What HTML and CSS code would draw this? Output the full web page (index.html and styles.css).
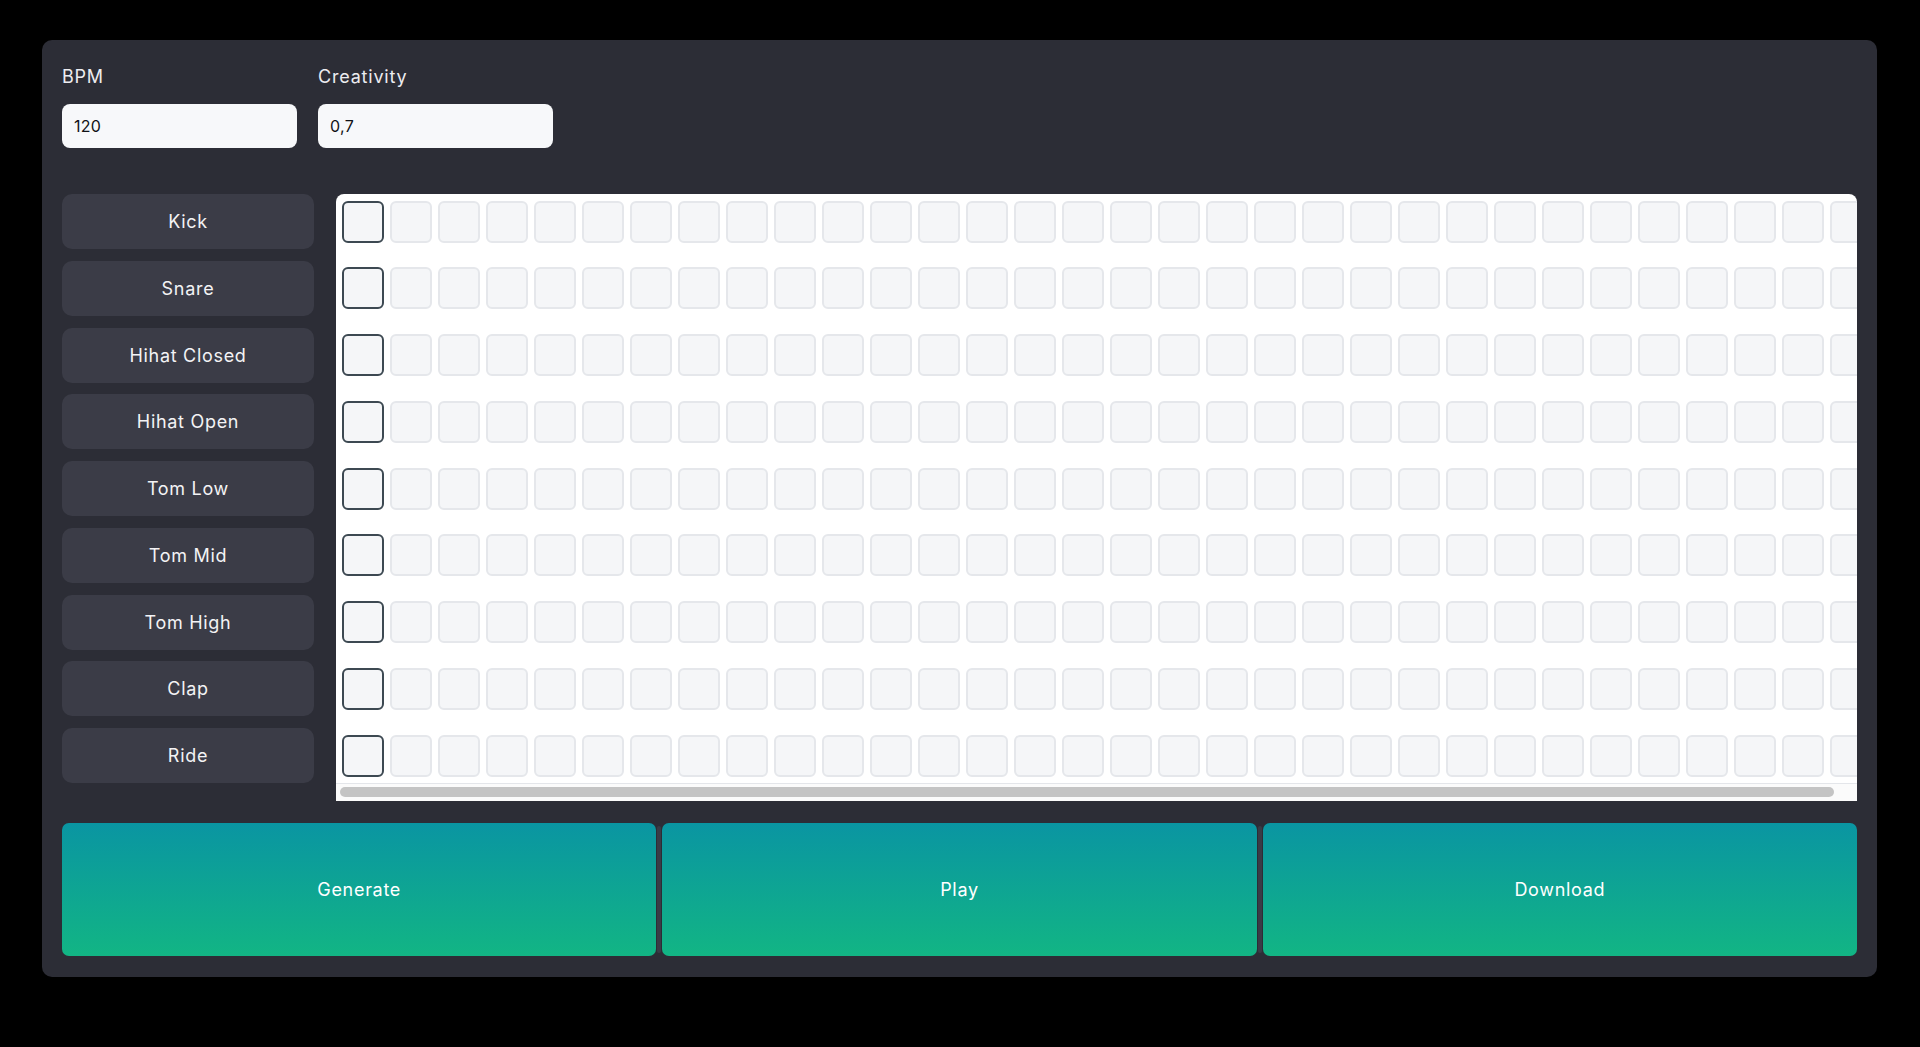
FILE: index.html
```html
<!DOCTYPE html>
<html lang="en">
<head>
<meta charset="utf-8">
<title>Drum Sequencer</title>
<link rel="stylesheet" href="styles.css">
</head>
<body>
<main class="card">
  <div class="params">
    <label class="field"><span class="label">BPM</span><input class="input" type="text" value="120"></label>
    <label class="field"><span class="label">Creativity</span><input class="input" type="text" value="0,7"></label>
  </div>
  <div class="sequencer">
    <div class="instruments">
      <button class="inst">Kick</button>
      <button class="inst">Snare</button>
      <button class="inst">Hihat Closed</button>
      <button class="inst">Hihat Open</button>
      <button class="inst">Tom Low</button>
      <button class="inst">Tom Mid</button>
      <button class="inst">Tom High</button>
      <button class="inst">Clap</button>
      <button class="inst">Ride</button>
    </div>
    <div class="grid-wrap">
      <div class="grid-viewport">
        <div class="grid">
          <div class="row"><span class="cell now"></span><span class="cell"></span><span class="cell"></span><span class="cell"></span><span class="cell"></span><span class="cell"></span><span class="cell"></span><span class="cell"></span><span class="cell"></span><span class="cell"></span><span class="cell"></span><span class="cell"></span><span class="cell"></span><span class="cell"></span><span class="cell"></span><span class="cell"></span><span class="cell"></span><span class="cell"></span><span class="cell"></span><span class="cell"></span><span class="cell"></span><span class="cell"></span><span class="cell"></span><span class="cell"></span><span class="cell"></span><span class="cell"></span><span class="cell"></span><span class="cell"></span><span class="cell"></span><span class="cell"></span><span class="cell"></span><span class="cell"></span></div>
          <div class="row"><span class="cell now"></span><span class="cell"></span><span class="cell"></span><span class="cell"></span><span class="cell"></span><span class="cell"></span><span class="cell"></span><span class="cell"></span><span class="cell"></span><span class="cell"></span><span class="cell"></span><span class="cell"></span><span class="cell"></span><span class="cell"></span><span class="cell"></span><span class="cell"></span><span class="cell"></span><span class="cell"></span><span class="cell"></span><span class="cell"></span><span class="cell"></span><span class="cell"></span><span class="cell"></span><span class="cell"></span><span class="cell"></span><span class="cell"></span><span class="cell"></span><span class="cell"></span><span class="cell"></span><span class="cell"></span><span class="cell"></span><span class="cell"></span></div>
          <div class="row"><span class="cell now"></span><span class="cell"></span><span class="cell"></span><span class="cell"></span><span class="cell"></span><span class="cell"></span><span class="cell"></span><span class="cell"></span><span class="cell"></span><span class="cell"></span><span class="cell"></span><span class="cell"></span><span class="cell"></span><span class="cell"></span><span class="cell"></span><span class="cell"></span><span class="cell"></span><span class="cell"></span><span class="cell"></span><span class="cell"></span><span class="cell"></span><span class="cell"></span><span class="cell"></span><span class="cell"></span><span class="cell"></span><span class="cell"></span><span class="cell"></span><span class="cell"></span><span class="cell"></span><span class="cell"></span><span class="cell"></span><span class="cell"></span></div>
          <div class="row"><span class="cell now"></span><span class="cell"></span><span class="cell"></span><span class="cell"></span><span class="cell"></span><span class="cell"></span><span class="cell"></span><span class="cell"></span><span class="cell"></span><span class="cell"></span><span class="cell"></span><span class="cell"></span><span class="cell"></span><span class="cell"></span><span class="cell"></span><span class="cell"></span><span class="cell"></span><span class="cell"></span><span class="cell"></span><span class="cell"></span><span class="cell"></span><span class="cell"></span><span class="cell"></span><span class="cell"></span><span class="cell"></span><span class="cell"></span><span class="cell"></span><span class="cell"></span><span class="cell"></span><span class="cell"></span><span class="cell"></span><span class="cell"></span></div>
          <div class="row"><span class="cell now"></span><span class="cell"></span><span class="cell"></span><span class="cell"></span><span class="cell"></span><span class="cell"></span><span class="cell"></span><span class="cell"></span><span class="cell"></span><span class="cell"></span><span class="cell"></span><span class="cell"></span><span class="cell"></span><span class="cell"></span><span class="cell"></span><span class="cell"></span><span class="cell"></span><span class="cell"></span><span class="cell"></span><span class="cell"></span><span class="cell"></span><span class="cell"></span><span class="cell"></span><span class="cell"></span><span class="cell"></span><span class="cell"></span><span class="cell"></span><span class="cell"></span><span class="cell"></span><span class="cell"></span><span class="cell"></span><span class="cell"></span></div>
          <div class="row"><span class="cell now"></span><span class="cell"></span><span class="cell"></span><span class="cell"></span><span class="cell"></span><span class="cell"></span><span class="cell"></span><span class="cell"></span><span class="cell"></span><span class="cell"></span><span class="cell"></span><span class="cell"></span><span class="cell"></span><span class="cell"></span><span class="cell"></span><span class="cell"></span><span class="cell"></span><span class="cell"></span><span class="cell"></span><span class="cell"></span><span class="cell"></span><span class="cell"></span><span class="cell"></span><span class="cell"></span><span class="cell"></span><span class="cell"></span><span class="cell"></span><span class="cell"></span><span class="cell"></span><span class="cell"></span><span class="cell"></span><span class="cell"></span></div>
          <div class="row"><span class="cell now"></span><span class="cell"></span><span class="cell"></span><span class="cell"></span><span class="cell"></span><span class="cell"></span><span class="cell"></span><span class="cell"></span><span class="cell"></span><span class="cell"></span><span class="cell"></span><span class="cell"></span><span class="cell"></span><span class="cell"></span><span class="cell"></span><span class="cell"></span><span class="cell"></span><span class="cell"></span><span class="cell"></span><span class="cell"></span><span class="cell"></span><span class="cell"></span><span class="cell"></span><span class="cell"></span><span class="cell"></span><span class="cell"></span><span class="cell"></span><span class="cell"></span><span class="cell"></span><span class="cell"></span><span class="cell"></span><span class="cell"></span></div>
          <div class="row"><span class="cell now"></span><span class="cell"></span><span class="cell"></span><span class="cell"></span><span class="cell"></span><span class="cell"></span><span class="cell"></span><span class="cell"></span><span class="cell"></span><span class="cell"></span><span class="cell"></span><span class="cell"></span><span class="cell"></span><span class="cell"></span><span class="cell"></span><span class="cell"></span><span class="cell"></span><span class="cell"></span><span class="cell"></span><span class="cell"></span><span class="cell"></span><span class="cell"></span><span class="cell"></span><span class="cell"></span><span class="cell"></span><span class="cell"></span><span class="cell"></span><span class="cell"></span><span class="cell"></span><span class="cell"></span><span class="cell"></span><span class="cell"></span></div>
          <div class="row"><span class="cell now"></span><span class="cell"></span><span class="cell"></span><span class="cell"></span><span class="cell"></span><span class="cell"></span><span class="cell"></span><span class="cell"></span><span class="cell"></span><span class="cell"></span><span class="cell"></span><span class="cell"></span><span class="cell"></span><span class="cell"></span><span class="cell"></span><span class="cell"></span><span class="cell"></span><span class="cell"></span><span class="cell"></span><span class="cell"></span><span class="cell"></span><span class="cell"></span><span class="cell"></span><span class="cell"></span><span class="cell"></span><span class="cell"></span><span class="cell"></span><span class="cell"></span><span class="cell"></span><span class="cell"></span><span class="cell"></span><span class="cell"></span></div>
        </div>
      </div>
      <div class="scrollbar"><div class="thumb"></div></div>
    </div>
  </div>
  <div class="actions">
    <button class="action">Generate</button>
    <span class="sep"></span>
    <button class="action">Play</button>
    <span class="sep"></span>
    <button class="action">Download</button>
  </div>
</main>
</body>
</html>
```

FILE: styles.css
```css
* {
  box-sizing: border-box;
}

html,
body {
  margin: 0;
  background: #000;
}

body {
  height: 1047px;
  overflow: hidden;
  padding: 40px 43px 0 42px;
  font-family: Inter, "Noto Sans", sans-serif;
}

.card {
  background: #2c2d36;
  border-radius: 10px;
  padding: 25px 20px 21px 20px;
}

.params {
  display: flex;
  gap: 21px;
}

.field {
  display: flex;
  flex-direction: column;
  width: 235px;
}

.label {
  color: #ececf0;
  font-size: 18px;
  font-weight: 400;
  letter-spacing: 0.8px;
  line-height: 24px;
  margin-bottom: 15px;
}

.input {
  height: 44px;
  border: none;
  border-radius: 8px;
  background: #f7f8fa;
  padding: 0 12px;
  font-family: Inter, "Noto Sans", sans-serif;
  font-size: 16px;
  font-weight: 400;
  letter-spacing: 0.3px;
  color: #111216;
  outline: none;
}

.sequencer {
  display: flex;
  gap: 22px;
  margin-top: 46px;
}

.instruments {
  width: 252px;
  flex: none;
  display: flex;
  flex-direction: column;
  gap: 11.75px;
}

.inst {
  height: 55px;
  border: none;
  border-radius: 10px;
  background: #3b3c47;
  color: #f3f3f5;
  font-family: Inter, "Noto Sans", sans-serif;
  font-size: 18px;
  font-weight: 400;
  letter-spacing: 0.7px;
  padding: 0;
}

.grid-wrap {
  flex: 1;
  min-width: 0;
  display: flex;
  flex-direction: column;
  background: #fff;
  border-radius: 8px 8px 0 0;
  overflow: hidden;
}

.grid-viewport {
  overflow: hidden;
}

.grid {
  width: max-content;
  padding: 0 6px;
  display: flex;
  flex-direction: column;
  gap: 11.75px;
}

.row {
  display: flex;
  align-items: center;
  gap: 6px;
  height: 55px;
}

.cell {
  width: 42px;
  height: 42px;
  border: 2px solid #e5e7eb;
  background: #f5f6f8;
  border-radius: 6px;
}

.cell.now {
  border-color: #3d4952;
}

.scrollbar {
  height: 18px;
  border-top: 1px solid #e4e6ea;
  background: #fbfbfb;
  padding: 3px 23px 4px 4px;
}

.thumb {
  height: 100%;
  border-radius: 6px;
  background: #c4c4c4;
}

.actions {
  display: flex;
  gap: 1px;
  height: 133px;
  margin-top: 22px;
}

.action {
  flex: 1;
  border: none;
  border-radius: 7px;
  background: linear-gradient(180deg, #0a95a2 0%, #12b584 100%);
  color: #fff;
  font-family: Inter, "Noto Sans", sans-serif;
  font-size: 18px;
  font-weight: 400;
  letter-spacing: 0.7px;
  padding: 0;
}

.sep {
  width: 4px;
  margin: 3px 0;
  border-radius: 2px;
  background: #3a3b46;
}
```
